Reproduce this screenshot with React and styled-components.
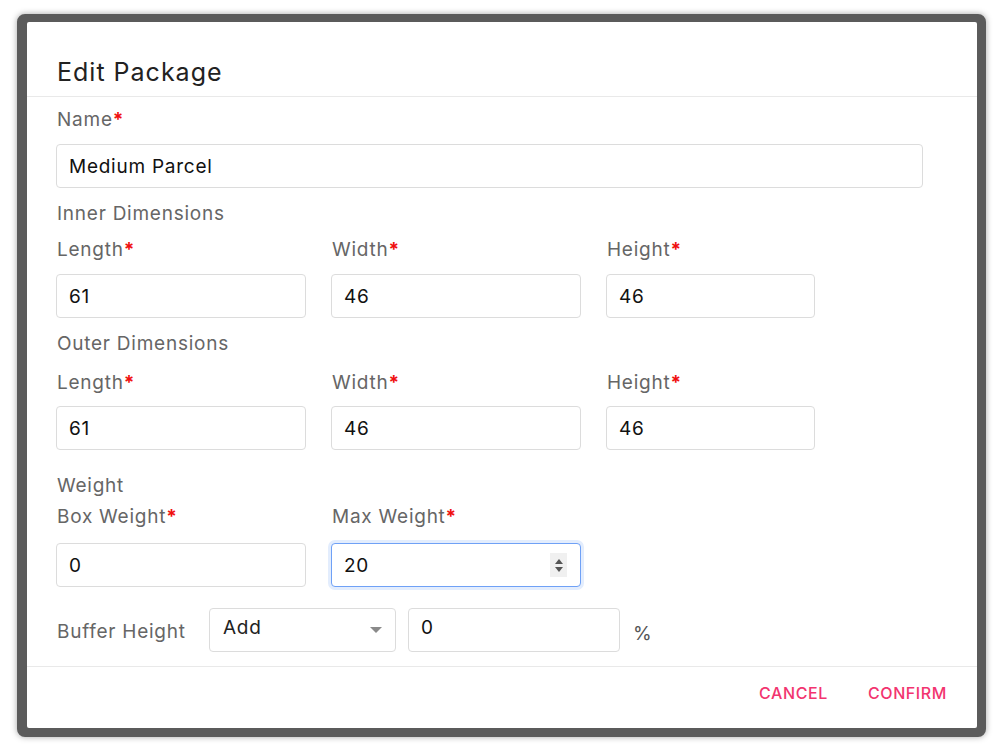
import React from 'react';
import styled, { createGlobalStyle, css } from 'styled-components';

const Global = createGlobalStyle`
  html, body {
    margin: 0;
    background: #ffffff;
    font-family: Inter, "Noto Sans", "Liberation Sans", sans-serif;
  }
  * { box-sizing: border-box; }
`;

const Page = styled.div`
  width: 1000px;
  height: 749px;
  padding: 14px 14px 12px 17px;
`;

const Frame = styled.div`
  height: 100%;
  border-style: solid;
  border-color: #5b5b5b;
  border-width: 8px 9px 9px 10px;
  border-radius: 8px;
  background: #5b5b5b;
  box-shadow: 0 0 6px rgba(0, 0, 0, 0.35);
`;

const Dialog = styled.div`
  height: 100%;
  background: #fff;
  border-radius: 2px;
  display: flex;
  flex-direction: column;
`;

const Header = styled.div`
  padding: 36px 30px 10px;
  border-bottom: 1px solid #e9e9e9;
`;

const Title = styled.h2`
  margin: 0;
  font-size: 25px;
  line-height: 28px;
  font-weight: 400;
  letter-spacing: 1px;
  color: #222;
`;

const Body = styled.div`
  flex: 1;
  padding: 11px 54px 14px 29px;
  display: flex;
  flex-direction: column;
`;

const Label = styled.div`
  font-size: 19px;
  line-height: 24px;
  letter-spacing: 0.75px;
  color: #666;
  margin-top: ${p => p.$mt || 0}px;
  padding-left: 1px;
  white-space: nowrap;
`;

const Star = styled.span`
  color: #f01010;
  font-weight: 700;
  letter-spacing: 0;
`;

const Field = styled.div`
  display: flex;
  flex-direction: column;
  gap: ${p => p.$gap}px;
  margin-top: ${p => p.$mt || 0}px;
`;

const Row = styled.div`
  display: grid;
  grid-template-columns: 250px 250px 209px;
  column-gap: 25px;
  margin-top: ${p => p.$mt || 0}px;
`;

const boxStyle = css`
  height: 44px;
  border: 1px solid #dcdcdc;
  border-radius: 4px;
  background: #fff;
  font-family: inherit;
  font-size: 19px;
  letter-spacing: 0.75px;
  color: #111;
  display: flex;
  align-items: center;
`;

const Input = styled.div`
  ${boxStyle}
  padding: 0 12px;
  width: ${p => p.$w ? `${p.$w}px` : '100%'};
  ${p => p.$focus && css`
    border-color: #6fa1f6;
    box-shadow: 0 0 0 3px #e3edfd;
  `}
  ${p => p.$top && css`
    align-items: flex-start;
    padding-top: 7px;
  `}
`;

const Value = styled.span`
  flex: 1;
`;

const Spinner = styled.div`
  width: 17px;
  height: 24px;
  background: #f0f0f0;
  display: flex;
  flex-direction: column;
  align-items: center;
  justify-content: center;
  gap: 3px;
  margin-right: 1px;
`;

const Tri = styled.span`
  width: 0;
  height: 0;
  border-left: 4px solid transparent;
  border-right: 4px solid transparent;
  ${p => p.$up
    ? css`border-bottom: 5px solid #555;`
    : css`border-top: 5px solid #555;`}
`;

const BufferRow = styled.div`
  display: flex;
  align-items: center;
  margin-top: 21px;
`;

const BufferLabel = styled(Label)`
  width: 153px;
  padding-top: 4px;
`;

const Select = styled.div`
  ${boxStyle}
  width: 187px;
  padding: 0 13px;
  align-items: flex-start;
  padding-top: 7px;
  color: #222;
  justify-content: space-between;
`;

const Caret = styled.span`
  margin-top: 11px;
  width: 0;
  height: 0;
  border-left: 6px solid transparent;
  border-right: 6px solid transparent;
  border-top: 6px solid #8a8a8a;
`;

const Percent = styled.span`
  font-size: 19px;
  color: #555;
  margin-left: 13px;
  padding-top: 6px;
`;

const Footer = styled.div`
  height: 62px;
  border-top: 1px solid #e9e9e9;
  display: flex;
  align-items: center;
  justify-content: flex-end;
  gap: 40px;
  padding: 0 30px 10px;
`;

const TextButton = styled.button`
  border: none;
  background: none;
  padding: 0;
  font-family: inherit;
  font-size: 16px;
  font-weight: 500;
  letter-spacing: 0.6px;
  color: #f2346f;
  cursor: pointer;
`;

const Req = ({ children }) => <>{children}<Star>*</Star></>;

const DimRow = ({ labelMt, inputGap, values }) => (
  <Row $mt={labelMt}>
    {['Length', 'Width', 'Height'].map((n, i) => (
      <Field key={n} $gap={inputGap}>
        <Label><Req>{n}</Req></Label>
        <Input>{values[i]}</Input>
      </Field>
    ))}
  </Row>
);

export default function App() {
  return (
    <Page>
      <Global />
      <Frame>
        <Dialog>
          <Header>
            <Title>Edit Package</Title>
          </Header>
          <Body>
            <Field $gap={12}>
              <Label><Req>Name</Req></Label>
              <Input>Medium Parcel</Input>
            </Field>

            <Label $mt={14}>Inner Dimensions</Label>
            <DimRow labelMt={12} inputGap={12} values={['61', '46', '46']} />

            <Label $mt={14}>Outer Dimensions</Label>
            <DimRow labelMt={15} inputGap={11} values={['61', '46', '46']} />

            <Label $mt={24}>Weight</Label>
            <Row $mt={7}>
              <Field $gap={14}>
                <Label><Req>Box Weight</Req></Label>
                <Input>0</Input>
              </Field>
              <Field $gap={14}>
                <Label><Req>Max Weight</Req></Label>
                <Input $focus>
                  <Value>20</Value>
                  <Spinner><Tri $up /><Tri /></Spinner>
                </Input>
              </Field>
            </Row>

            <BufferRow>
              <BufferLabel>Buffer Height</BufferLabel>
              <Select>
                <span>Add</span>
                <Caret />
              </Select>
              <Input $w={212} $top style={{ marginLeft: 12 }}>0</Input>
              <Percent>%</Percent>
            </BufferRow>
          </Body>
          <Footer>
            <TextButton>CANCEL</TextButton>
            <TextButton>CONFIRM</TextButton>
          </Footer>
        </Dialog>
      </Frame>
    </Page>
  );
}
